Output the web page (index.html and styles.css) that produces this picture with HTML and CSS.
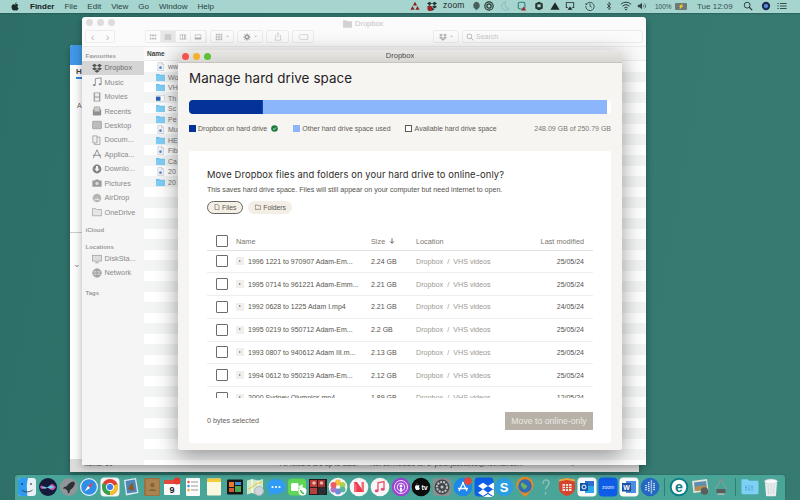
FILE: index.html
```html
<!DOCTYPE html>
<html lang="en">
<head>
<meta charset="utf-8">
<title>Manage hard drive space</title>
<link rel="stylesheet" href="styles.css">
</head>
<body>
<svg class="defs" width="0" height="0">
  <symbol id="db" viewBox="0 0 24 24"><path d="M6 2 12 6 6 10 0 6zM18 2 24 6 18 10 12 6zM0 14 6 10 12 14 6 18zM24 14 18 18 12 14 18 10zM6 19.5 12 15.5 18 19.5 12 23.5z"/></symbol>
  <symbol id="folder" viewBox="0 0 12 10"><path d="M0 1.2C0 .5.4 0 1 0h3l1 1.2h6c.6 0 1 .4 1 1V9c0 .6-.4 1-1 1H1c-.6 0-1-.4-1-1z" fill="#6cc0ee"/><path d="M0 2.4h12V9c0 .6-.4 1-1 1H1c-.6 0-1-.4-1-1z" fill="#7fcdf5"/></symbol>
  <symbol id="doc" viewBox="0 0 12 12"><path d="M2.5.5h5l2.500 2.500v8.500h-7.500z" fill="#f4f6f8" stroke="#b5bcc4" stroke-width=".7"/><path d="M7.500.5v2.500h2.500" fill="none" stroke="#b5bcc4" stroke-width=".7"/><circle cx="6" cy="7.500" r="1.800" fill="#5b87c9"/></symbol>
</svg>

<header class="menubar">
  <svg class="apple" viewBox="0 0 16 18"><path d="M11.200 1c.1 1.200-1.200 3-3 2.800C8 2.400 9.600 1 11.200 1zM8.200 5c.9 0 1.800-.8 3.200-.8 1.300 0 2.500.7 3.200 1.800-2.700 1.600-2.200 5.400.6 6.500-.7 1.900-2.200 4.500-3.800 4.500-1 0-1.500-.7-2.800-.7s-1.900.7-2.900.7C3.800 17 1 13.400 1 9.800 1 6.500 3.100 4.300 5.300 4.300c1.300 0 2.200.7 2.900.7z"/></svg>
  <strong class="menu-app">Finder</strong>
  <span>File</span><span>Edit</span><span>View</span><span>Go</span><span>Window</span><span>Help</span>
  <div class="status">
    <svg class="st" style="left:410px" viewBox="0 0 12 12"><path d="M6 1 8.500 5.500h-5zM3 6 5.500 10.500H.5zM9 6 11.500 10.500h-5z" fill="#8e1f1f"/></svg>
    <svg class="st" style="left:427px" viewBox="0 0 24 24"><use href="#db" fill="#26332f"/><circle cx="7" cy="18" r="6" fill="#a31f1f"/></svg>
    <span class="st-text zoomtxt">zoom</span>
    <svg class="st" style="left:471px" viewBox="0 0 12 12"><path d="M6 1a4.500 4.500 0 0 1 2 8.500L6 11.500l-.6-2A4.500 4.500 0 0 1 6 1z" fill="#47605c"/></svg>
    <svg class="st" style="left:484px" viewBox="0 0 12 12"><circle cx="6" cy="6" r="5" fill="none" stroke="#26332f" stroke-width="1.400"/><circle cx="6" cy="6" r="2.600" fill="none" stroke="#26332f" stroke-width="1.400"/></svg>
    <svg class="st" style="left:500px" viewBox="0 0 12 12"><path d="M7 1a5 5 0 1 0 4 8A5 5 0 0 1 7 1z" fill="none" stroke="#8fbab5" stroke-width="1.200"/></svg>
    <svg class="st" style="left:517px" viewBox="0 0 12 12"><rect x="1.500" y="1.500" width="8" height="8" rx="2" fill="none" stroke="#2f7f80" stroke-width="1.300"/><path d="M8 6.500 11 11.500H5z" fill="#a32a2a"/></svg>
    <svg class="st" style="left:534px" viewBox="0 0 12 12"><path d="M6 .8 10.500 3v6L6 11.200 1.500 9V3z" fill="#26332f"/><rect x="4" y="4" width="4" height="3.500" fill="#a5d4cf"/></svg>
    <svg class="st" style="left:550px" viewBox="0 0 12 12"><path d="M6 1.500 11.500 10.500H.5z" fill="#1e2a28"/></svg>
    <svg class="st" style="left:565px" viewBox="0 0 12 12"><path d="M1 1.500h10v7H9L8 7.500h2V2.500H2v5h2L3 8.500H1z" fill="#1e2a28"/><path d="M6 6.500 9 10.500H3z" fill="#1e2a28"/></svg>
    <svg class="st" style="left:585px" viewBox="0 0 12 12"><path d="M2 3.500A5 5 0 1 1 1 6" fill="none" stroke="#33443f"/><path d="M6 3v3.200L8 7.500" fill="none" stroke="#33443f"/><path d="M.5 2.500 3 3.700 1 5.500z" fill="#33443f"/></svg>
    <svg class="st" style="left:604px" viewBox="0 0 12 12"><path d="M3.500 3.500 8 8 6 10.500V1.500L8 4 3.500 8.500" fill="none" stroke="#33443f"/></svg>
    <svg class="st wifi" viewBox="0 0 14 11"><path d="M1 3.500a8.500 8.500 0 0 1 12 0M3 5.700a5.600 5.600 0 0 1 8 0M5 7.800a2.800 2.800 0 0 1 4 0" fill="none" stroke="#26332f" stroke-width="1.100"/><circle cx="7" cy="9.600" r="1" fill="#26332f"/></svg>
    <svg class="st" style="left:637px" viewBox="0 0 12 12"><path d="M1 4.500h2l3-2.500v8L3 7.500H1z" fill="#33443f"/><path d="M7.500 4.500a2 2 0 0 1 0 3M9 3a4 4 0 0 1 0 6" fill="none" stroke="#33443f" stroke-width=".8"/></svg>
    <span class="st-text pct">100%</span>
    <span class="battery">⚡</span>
    <span class="st-text clock">Tue 12:09</span>
    <svg class="st" style="left:743px" viewBox="0 0 12 12"><circle cx="5" cy="5" r="3.500" fill="none" stroke="#26332f" stroke-width="1.100"/><path d="M7.500 7.500 11 11" stroke="#26332f" stroke-width="1.300"/></svg>
    <svg class="st" style="left:761px" viewBox="0 0 12 12"><circle cx="6" cy="6" r="5" fill="#1c2c55"/><circle cx="6" cy="6" r="2.500" fill="#5a8fd8"/></svg>
    <svg class="st" style="left:777px" viewBox="0 0 12 12"><path d="M3.500 3h8M3.500 6h8M3.500 9h8" stroke="#26332f"/><path d="M.5 3h1.500M.5 6h1.500M.5 9h1.500" stroke="#26332f"/></svg>
  </div>
</header>

<main class="desktop">
  <section class="window back">
    <div class="back-head"></div>
    <div class="back-tab">H</div>
    <div class="back-a">A</div>
    <hr class="back-rule">
    <div class="back-chev">⌄</div>
    <div class="back-status">
      <span class="bs-items">Items: 10</span>
      <span class="bs-sync">All folders are up to date.</span>
      <span class="bs-conn">Not connected to: 1. peterjacobs0z@hotmail.com</span>
      <span class="bs-slider"><i></i></span>
    </div>
  </section>

  <section class="window finder">
    <div class="f-title">
      <div class="lights"><i></i><i></i><i></i></div>
      <div class="f-name"><svg width="9" height="8" viewBox="0 0 12 10"><path d="M0 1.200C0 .5.400 0 1 0h3l1 1.200h6c.6 0 1 .4 1 1V9c0 .6-.4 1-1 1H1c-.6 0-1-.4-1-1z" fill="#d2d2d2"/></svg>Dropbox</div>
    </div>
    <div class="f-toolbar">
      <div class="tb-btn tb-nav"><span>‹</span><span>›</span></div>
      <div class="tb-btn tb-views">
        <span><svg viewBox="0 0 10 8"><path d="M1 1h2v2H1zM4 1h2v2H4zM7 1h2v2H7zM1 5h2v2H1zM4 5h2v2H4zM7 5h2v2H7z"/></svg></span>
        <span class="on"><svg viewBox="0 0 10 8"><path d="M1 1h8v1H1zM1 3.500h8v1H1zM1 6h8v1H1z"/></svg></span>
        <span><svg viewBox="0 0 10 8"><path d="M1 1h8v6H1zM1.700 1.700v4.600h2V1.700zm3 0v4.600h1.600V1.700zm2.600 0v4.600h1V1.700z" fill-rule="evenodd"/></svg></span>
        <span><svg viewBox="0 0 10 8"><path d="M1 1h8v6H1zM1.700 1.700V4.500h6.600V1.700z" fill-rule="evenodd"/></svg></span>
      </div>
      <div class="tb-btn tb-drop"><svg viewBox="0 0 10 10"><path d="M1 1h2v2H1zM4 1h2v2H4zM7 1h2v2H7zM1 4h2v2H1zM4 4h2v2H4zM7 4h2v2H7zM1 7h2v2H1zM4 7h2v2H4zM7 7h2v2H7z"/></svg><b>⌄</b></div>
      <div class="tb-btn tb-gear"><svg viewBox="0 0 10 10"><circle cx="5" cy="5" r="2.200" fill="none" stroke="#a0a0a0" stroke-width="2"/><path d="M5 .5v2M5 7.500v2M.5 5h2M7.500 5h2M1.800 1.800l1.400 1.400M6.800 6.800l1.400 1.400M8.200 1.800 6.800 3.200M3.200 6.800 1.800 8.200" stroke="#a0a0a0" stroke-width="1.200"/></svg><b>⌄</b></div>
      <div class="tb-btn tb-share"><svg viewBox="0 0 10 12"><path d="M3 4.500H1.500V11h7V4.500H7M5 7.500V1M3.300 2.700 5 1l1.700 1.700" fill="none" stroke="#bdbdbd" stroke-width=".8"/></svg></div>
      <div class="tb-btn tb-tag"><svg viewBox="0 0 14 8"><path d="M3 1h9.500v6H3L.7 4z" fill="none" stroke="#c4c4c4" stroke-width=".8"/></svg></div>
      <div class="tb-spacer"></div>
      <div class="tb-btn tb-dbx"><svg viewBox="0 0 24 24"><use href="#db" fill="#b0b0b0"/></svg><b>⌄</b></div>
      <div class="tb-btn tb-search"><svg viewBox="0 0 10 10"><circle cx="4.200" cy="4.200" r="3" fill="none" stroke="#a9a9a9"/><path d="M6.500 6.500 9.300 9.300" stroke="#a9a9a9"/></svg>Search</div>
    </div>
    <div class="f-body">
      <nav class="sidebar">
        <div class="s-head s-first">Favourites</div>
        <div class="s-item sel"><svg viewBox="0 0 24 24"><use href="#db" fill="#555"/></svg>Dropbox</div>
        <div class="s-item"><svg viewBox="0 0 12 12"><path d="M4 9.500V2l7-1v7.500" fill="none" stroke="#8d8d8d" stroke-width="1.100"/><ellipse cx="2.700" cy="9.700" rx="1.700" ry="1.300" fill="#8d8d8d"/><ellipse cx="9.700" cy="8.700" rx="1.700" ry="1.300" fill="#8d8d8d"/></svg>Music</div>
        <div class="s-item"><svg viewBox="0 0 12 12"><path d="M2 .5h8v11H2z" fill="#9a9a9a"/><path d="M3.500 1.500h5v4h-5zM3.500 6.500h5v4h-5z" fill="#eee"/></svg>Movies</div>
        <div class="s-item"><svg viewBox="0 0 12 12"><rect x="1" y="4" width="10" height="7.500" rx="1.500" fill="#8f8f8f"/><rect x="2.500" y="1" width="7" height="6" rx="1" fill="#c9c9c9" stroke="#8f8f8f" stroke-width=".6"/></svg>Recents</div>
        <div class="s-item"><svg viewBox="0 0 12 12"><rect x=".5" y="1.500" width="11" height="9" rx="1" fill="#bcbcbc" stroke="#8f8f8f" stroke-width=".7"/></svg>Desktop</div>
        <div class="s-item"><svg viewBox="0 0 12 12"><path d="M3 2.500h6.500v9H3z" fill="#eee" stroke="#8f8f8f" stroke-width=".8"/><path d="M1 1h5v8.500H1z" fill="#eee" stroke="#8f8f8f" stroke-width=".8"/></svg>Docum...</div>
        <div class="s-item"><svg viewBox="0 0 12 12"><path d="M6 1 1.500 11M6 1l4.500 10M1 7.500h10" fill="none" stroke="#7f7f7f"/></svg>Applica...</div>
        <div class="s-item"><svg viewBox="0 0 12 12"><circle cx="6" cy="6" r="5.300" fill="#808080"/><path d="M4.700 2.500h2.600v3.300h2L6 9.300 2.700 5.800h2z" fill="#f4f4f4"/></svg>Downlo...</div>
        <div class="s-item"><svg viewBox="0 0 12 12"><path d="M.5 3h3l1-1.200h3l1 1.200h3v7.500H.5z" fill="#9b9b9b"/><circle cx="6" cy="6.500" r="2" fill="#dcdcdc"/></svg>Pictures</div>
        <div class="s-item"><svg viewBox="0 0 12 12"><circle cx="6" cy="6" r="5.200" fill="#b5b5b5"/><path d="M2.300 9A5 5 0 0 1 9.700 9M3.800 8.300A3 3 0 0 1 8.200 8.300" fill="none" stroke="#f4f4f4" stroke-width=".8"/></svg>AirDrop</div>
        <div class="s-item"><svg viewBox="0 0 12 12"><path d="M.5 2h4l1 1h6v7.500H.5z" fill="#e6e6e6" stroke="#8d8d8d" stroke-width=".7"/></svg>OneDrive</div>
        <div class="s-head s-icloud">iCloud</div>
        <div class="s-head s-loc">Locations</div>
        <div class="s-item"><svg viewBox="0 0 12 12"><rect x=".5" y="1.500" width="11" height="7" fill="#dcdcdc" stroke="#8f8f8f" stroke-width=".7"/><path d="M4 10.500h4" stroke="#8f8f8f"/></svg>DiskSta...</div>
        <div class="s-item"><svg viewBox="0 0 12 12"><circle cx="6" cy="6" r="5" fill="#ccc" stroke="#808080" stroke-width=".8"/><path d="M1 6h10M6 1v10M2.500 3h7M2.500 9h7" stroke="#808080" stroke-width=".6"/></svg>Network</div>
        <div class="s-head s-tags">Tags</div>
      </nav>
      <div class="list">
        <div class="list-head"><b>Name</b></div>
        <div class="list-rows">
          <div class="l-row"><svg viewBox="0 0 12 12"><use href="#doc"/></svg>www</div>
          <div class="l-row"><svg viewBox="0 0 12 10"><use href="#folder"/></svg>Wo</div>
          <div class="l-row"><svg viewBox="0 0 12 10"><use href="#folder"/></svg>VH</div>
          <div class="l-row"><svg viewBox="0 0 12 12"><rect x="1" y="2" width="10" height="8" fill="#fff" stroke="#b9c7de" stroke-width=".7"/><rect x="0" y="3.500" width="6" height="5.500" fill="#2a62b8"/></svg>Th</div>
          <div class="l-row"><svg viewBox="0 0 12 10"><use href="#folder"/></svg>Sc</div>
          <div class="l-row"><svg viewBox="0 0 12 10"><use href="#folder"/></svg>Pe</div>
          <div class="l-row"><svg viewBox="0 0 12 12"><use href="#doc"/></svg>Mu</div>
          <div class="l-row"><svg viewBox="0 0 12 10"><use href="#folder"/></svg>HE</div>
          <div class="l-row"><svg viewBox="0 0 12 12"><use href="#doc"/></svg>Fib</div>
          <div class="l-row"><svg viewBox="0 0 12 10"><use href="#folder"/></svg>Ca</div>
          <div class="l-row"><svg viewBox="0 0 12 12"><use href="#doc"/></svg>20</div>
          <div class="l-row"><svg viewBox="0 0 12 10"><use href="#folder"/></svg>20</div>
        </div>
      </div>
    </div>
  </section>

  <section class="window dialog">
    <div class="d-title">
      <div class="lights live"><i></i><i></i><i></i></div>
      <span>Dropbox</span>
    </div>
    <div class="d-body">
      <h1>Manage hard drive space</h1>
      <div class="usage"><div class="u-dbx"></div><div class="u-other"></div></div>
      <div class="legend">
        <span class="swatch dark"></span><span>Dropbox on hard drive</span>
        <svg class="ok" viewBox="0 0 8 8"><circle cx="4" cy="4" r="3.800" fill="#1f7a3d"/><path d="M2.300 4.100 3.500 5.300 5.700 2.900" fill="none" stroke="#fff" stroke-width=".9"/></svg>
        <span class="swatch light"></span><span>Other hard drive space used</span>
        <span class="swatch empty"></span><span>Available hard drive space</span>
        <span class="legend-total">248.09 GB of 250.79 GB</span>
      </div>
      <div class="card">
        <h2>Move Dropbox files and folders on your hard drive to online-only?</h2>
        <p>This saves hard drive space. Files will still appear on your computer but need internet to open.</p>
        <div class="pills">
          <span class="pill active"><svg viewBox="0 0 8 9"><path d="M1 .5h4l2 2v6H1z" fill="none" stroke="#4e4a44" stroke-width=".8"/></svg>Files</span>
          <span class="pill"><svg viewBox="0 0 9 8"><path d="M.5 1h3l1 1h4v5.500h-8z" fill="none" stroke="#4e4a44" stroke-width=".8"/></svg>Folders</span>
        </div>
        <div class="t-row t-head">
          <span class="check"></span><span>Name</span>
          <span class="size-h">Size <svg viewBox="0 0 8 8"><path d="M4 .5V7M1.500 4.500 4 7l2.500-2.500" fill="none" stroke="#3d3a36" stroke-width="1"/></svg></span>
          <span>Location</span><span>Last modified</span>
        </div>
        <div class="t-scroll">
          <div class="t-row"><span class="check"></span><span class="t-name"><i class="thumb"></i>1996 1221 to 970907 Adam-Em...</span><span class="t-size">2.24 GB</span><span class="t-loc">Dropbox&nbsp; /&nbsp; VHS videos</span><span class="t-date">25/05/24</span></div>
          <div class="t-row"><span class="check"></span><span class="t-name"><i class="thumb"></i>1995 0714 to 961221 Adam-Emm...</span><span class="t-size">2.21 GB</span><span class="t-loc">Dropbox&nbsp; /&nbsp; VHS videos</span><span class="t-date">25/05/24</span></div>
          <div class="t-row"><span class="check"></span><span class="t-name"><i class="thumb"></i>1992 0628 to 1225 Adam I.mp4</span><span class="t-size">2.21 GB</span><span class="t-loc">Dropbox&nbsp; /&nbsp; VHS videos</span><span class="t-date">24/05/24</span></div>
          <div class="t-row"><span class="check"></span><span class="t-name"><i class="thumb"></i>1995 0219 to 950712 Adam-Em...</span><span class="t-size">2.2 GB</span><span class="t-loc">Dropbox&nbsp; /&nbsp; VHS videos</span><span class="t-date">25/05/24</span></div>
          <div class="t-row"><span class="check"></span><span class="t-name"><i class="thumb"></i>1993 0807 to 940612 Adam III.m...</span><span class="t-size">2.13 GB</span><span class="t-loc">Dropbox&nbsp; /&nbsp; VHS videos</span><span class="t-date">25/05/24</span></div>
          <div class="t-row"><span class="check"></span><span class="t-name"><i class="thumb"></i>1994 0612 to 950219 Adam-Em...</span><span class="t-size">2.12 GB</span><span class="t-loc">Dropbox&nbsp; /&nbsp; VHS videos</span><span class="t-date">25/05/24</span></div>
          <div class="t-row"><span class="check"></span><span class="t-name"><i class="thumb"></i>2000 Sydney Olympics.mp4</span><span class="t-size">1.89 GB</span><span class="t-loc">Dropbox&nbsp; /&nbsp; VHS videos</span><span class="t-date">12/05/24</span></div>
        </div>
        <div class="c-foot">
          <span>0 bytes selected</span>
          <span class="move">Move to online-only</span>
        </div>
      </div>
    </div>
  </section>
</main>

<footer class="dock">
  <svg viewBox="0 0 20 20"><rect x="1" y="1" width="18" height="18" rx="3" fill="#e9f1f7"/><path d="M1 4a3 3 0 0 1 3-3h7c-1 4-1.500 8-1 11-.1 2 0 4.500.5 7H4a3 3 0 0 1-3-3z" fill="#2e9af0"/><path d="M5 6v2M14 6v2" stroke="#123" /><path d="M4.500 13c3 2.500 8 2.500 11 0" fill="none" stroke="#234" stroke-width=".8"/></svg>
  <svg viewBox="0 0 20 20"><circle cx="10" cy="10" r="9" fill="#141a3a"/><path d="M2 10c3-5 4 4 8 0s4-4 8 0c-3 5-5 3-8 1s-5 4-8-1z" fill="#c74fb0"/><path d="M4 10c3-2 4 2 6 0s4-2 6 0c-3 3-4 1-6 1s-3 2-6-1z" fill="#5fd7e8"/></svg>
  <svg viewBox="0 0 20 20"><circle cx="10" cy="10" r="9" fill="#8f9499"/><path d="M14.500 4.500c-3 .3-5.500 2.500-7 5l-2.500.5-1 1.500 2.500.3 2.200 2.200.3 2.500 1.500-1 .5-2.500c2.500-1.500 4.700-4 5-7z" fill="#2c3035"/></svg>
  <svg viewBox="0 0 20 20"><circle cx="10" cy="10" r="9" fill="#e9f3fb"/><circle cx="10" cy="10" r="7.800" fill="#2f8fe6"/><path d="M14.500 5.500 11 11 9 9z" fill="#ef3f3f"/><path d="M5.500 14.500 9 9l2 2z" fill="#fff"/></svg>
  <svg viewBox="0 0 20 20"><rect x=".5" y=".5" width="19" height="19" rx="4" fill="#f5f5f5"/><circle cx="10" cy="10" r="8" fill="#e0402f"/><path d="M10 10 17.400 7A8 8 0 0 1 10 18z" fill="#f3c22d"/><path d="M10 10 10 18A8 8 0 0 1 3.100 6z" fill="#2fa34f"/><circle cx="10" cy="10" r="3.700" fill="#3f7fe8" stroke="#fff"/></svg>
  <svg viewBox="0 0 20 20"><path d="M3 3 15 1l2.500 15L5 18.500z" fill="#dfe9f3"/><path d="M4.500 4 14 2.500 16 15 6 16.500z" fill="#4d86b7"/><path d="M7 12c1-4 4-6 5-6 0 3 .5 5 1.500 7l-3 .5z" fill="#8a5b2f"/></svg>
  <svg viewBox="0 0 20 20"><rect x="2" y="1" width="16" height="18" rx="1.500" fill="#9b7342"/><rect x="4" y="2" width="13" height="16" fill="#a98350"/><circle cx="10.500" cy="8" r="2.200" fill="#8a6436"/><path d="M6.500 14c.8-2.500 7.200-2.500 8 0z" fill="#8a6436"/></svg>
  <svg viewBox="0 0 20 20"><rect x="2" y="3" width="16" height="15" rx="1" fill="#fafafa"/><rect x="2" y="3" width="16" height="4" fill="#e04a3f"/><text x="10" y="16" class="ic-cal">9</text><circle cx="15" cy="4" r="3.500" fill="#e93b30"/></svg>
  <svg viewBox="0 0 20 20"><rect x="3" y="1" width="14" height="18" rx="1" fill="#fbfbfb"/><path d="M8 5h7M8 9h7M8 13h7" stroke="#9a9a9a"/><circle cx="5.500" cy="5" r="1.200" fill="#f0443a"/><circle cx="5.500" cy="9" r="1.200" fill="#2f86f0"/><circle cx="5.500" cy="13" r="1.200" fill="#f59a23"/></svg>
  <svg viewBox="0 0 20 20"><rect x="3" y="1.500" width="14" height="17" rx="1" fill="#fbf8df"/><path d="M3 2.500a1 1 0 0 1 1-1h12a1 1 0 0 1 1 1V5H3z" fill="#f5cd3d"/></svg>
  <svg viewBox="0 0 20 20"><rect x="2" y="2.500" width="16" height="15" rx="1" fill="#161616"/><rect x="4" y="5" width="5" height="5" fill="#e87a2c"/><rect x="10" y="5" width="6" height="3" fill="#3f8edb"/><rect x="10" y="9" width="6" height="6" fill="#4ca64c"/><rect x="4" y="11" width="5" height="4" fill="#cf5a2c"/></svg>
  <svg viewBox="0 0 20 20"><path d="M2 3.500 7 2l6 1.500L18 2v14l-5 2-6-2-5 1.500z" fill="#d3e9c8"/><path d="M7 2v14M13 3.500V18" stroke="#fff"/><path d="M3 12c4-1 6-5 14-7" stroke="#f3c22d" fill="none"/><circle cx="14" cy="14" r="4.500" fill="#cfd5da" stroke="#aeb5ba"/></svg>
  <svg viewBox="0 0 20 20"><path d="M10 2c5 0 9 3.300 9 7.500S15 17 10 17c-1 0-2-.1-3-.5C5.500 18 3.500 18.500 2 18.500c1-1 1.800-2.300 1.800-3.500C2 13.600 1 11.700 1 9.500 1 5.300 5 2 10 2z" fill="#2f9bf5"/><circle cx="6.500" cy="10" r="1.100" fill="#fff"/><circle cx="10" cy="10" r="1.100" fill="#fff"/><circle cx="13.500" cy="10" r="1.100" fill="#fff"/></svg>
  <svg viewBox="0 0 20 20"><rect x="1" y="1.500" width="18" height="17" rx="4" fill="#5fd755"/><rect x="4" y="6" width="7.500" height="8" rx="1.500" fill="#fff"/><path d="M12 9.500 15.500 7v6L12 10.500z" fill="#fff"/><circle cx="15.500" cy="14.500" r="4" fill="#fff"/><path d="M13.500 13c.5 2 1.800 3.300 3.600 3.600" stroke="#35b53c" stroke-width="1.200" fill="none"/></svg>
  <svg viewBox="0 0 20 20"><rect x="1" y="2" width="18" height="16" fill="#2a1b1b"/><rect x="2" y="3" width="7" height="7" fill="#c23b3b"/><rect x="10" y="3" width="7" height="7" fill="#a63434"/><rect x="2" y="11" width="7" height="6" fill="#b54040"/><circle cx="6" cy="6" r="1.800" fill="#e6b9a1"/><circle cx="13.500" cy="6" r="1.800" fill="#e6b9a1"/><circle cx="14" cy="14" r="4" fill="#2a2f36"/></svg>
  <svg viewBox="0 0 20 20"><circle cx="10" cy="10" r="9.300" fill="#f7f7f7"/><g opacity=".9"><circle cx="10" cy="5.500" r="3" fill="#f6b92b"/><circle cx="14.500" cy="8" r="3" fill="#a6cf3f"/><circle cx="14.500" cy="12.500" r="3" fill="#48b38c"/><circle cx="10" cy="14.500" r="3" fill="#5c83d6"/><circle cx="5.500" cy="12.500" r="3" fill="#a768bd"/><circle cx="5.500" cy="8" r="3" fill="#ee4d54"/></g></svg>
  <svg viewBox="0 0 20 20"><circle cx="10" cy="10" r="9.300" fill="#f5f5f5"/><path d="M5 15V5l3 0 7 10h-3z" fill="#f03a4d"/><path d="M5 5v10h2.500V8.500zM15 15V5h-2.500v6.500z" fill="#f36b7a"/></svg>
  <svg viewBox="0 0 20 20"><circle cx="10" cy="10" r="9.300" fill="#f6f6f6"/><path d="M8 13.500V5.800l6-1.300v7.500" fill="none" stroke="#ef4f70" stroke-width="1.300"/><ellipse cx="6.700" cy="13.800" rx="1.900" ry="1.500" fill="#e94a78"/><ellipse cx="12.700" cy="12.300" rx="1.900" ry="1.500" fill="#e94a78"/></svg>
  <svg viewBox="0 0 20 20"><circle cx="10" cy="10" r="9.300" fill="#9a45d4"/><circle cx="10" cy="10" r="6.500" fill="none" stroke="#f3e3fb" stroke-width="1"/><circle cx="10" cy="10" r="3.800" fill="none" stroke="#f3e3fb" stroke-width="1"/><circle cx="10" cy="9" r="1.500" fill="#fff"/><path d="M9 11h2l-.4 4.500h-1.200z" fill="#fff"/></svg>
  <svg viewBox="0 0 20 20"><circle cx="10" cy="10" r="9.300" fill="#0c0c0c"/><text x="10.500" y="12.800" class="ic-tv">tv</text><path d="M5.500 7.500c.5 0 1-.5 1-1-.5 0-1 .5-1 1zM4 10c0-1 .7-1.800 1.500-1.800.4 0 .7.200 1 .2s.6-.2 1-.2c.8 0 1.200.6 1.200.6-1 .6-.8 2 .2 2.400-.3.800-.9 1.800-1.500 1.800-.4 0-.6-.3-1-.3s-.6.300-1 .3C5 13 4 11.400 4 10z" fill="#fff"/></svg>
  <svg viewBox="0 0 20 20"><rect x="1" y="1" width="18" height="18" rx="4" fill="#8c8f91"/><circle cx="10" cy="10" r="7.500" fill="#43474a"/><circle cx="10" cy="10" r="5" fill="none" stroke="#bfc3c6" stroke-width="2" stroke-dasharray="2 1"/><circle cx="10" cy="10" r="1.500" fill="#bfc3c6"/></svg>
  <svg viewBox="0 0 20 20"><circle cx="10" cy="10" r="9.300" fill="#1f86ea"/><path d="M10.500 5 6 14M9.500 5 14 14M5 11.500h10" stroke="#fff" stroke-width="1.300" fill="none"/><circle cx="15" cy="4" r="3.800" fill="#e8463c"/></svg>
  <svg viewBox="0 0 20 20"><rect x=".5" y=".5" width="19" height="19" rx="4" fill="#0e5fe8"/><svg x="4" y="4" width="12" height="12" viewBox="0 0 24 24"><use href="#db" fill="#fff"/></svg></svg>
  <svg viewBox="0 0 20 20"><circle cx="10" cy="10" r="9.300" fill="#2c9ee0"/><text x="10" y="14.500" class="ic-s">S</text></svg>
  <svg viewBox="0 0 20 20"><path d="M10 20 5 15a8.500 8.500 0 1 1 10 0z" fill="#e78a24"/><circle cx="10" cy="9" r="6.800" fill="#2f6db8"/><path d="M6 6c3-1 3 2 5 2s1 3-1 4-2-2-4-3z" fill="#6fb15a"/></svg>
  <svg viewBox="0 0 20 20"><path d="M8 7C8 4 9.300 3 11 3s3 1.200 3 3c0 3-3.500 3.500-3.500 6.500M10.500 15v2.500" fill="none" stroke="#8fbfb8" stroke-width="1.400" transform="translate(-1)"/></svg>
  <svg viewBox="0 0 20 20"><path d="M2 2.500 10 1l8 1.500V11c0 4-4 7-8 8-4-1-8-4-8-8z" fill="#d8432c"/><path d="M2 2.500 10 1l8 1.500v2L10 3 2 4.500z" fill="#e2b04c"/><path d="M5.500 7h9v7h-9z" fill="#f3e8dc"/><path d="M5.500 9.300h9M5.500 11.600h9M8.500 7v7M11.500 7v7" stroke="#c63a27" stroke-width=".8"/></svg>
  <svg viewBox="0 0 20 20"><rect x=".5" y=".5" width="19" height="19" rx="4" fill="#fafafa"/><rect x="8" y="4" width="9" height="12" fill="#2fa8ea"/><rect x="8" y="4" width="9" height="5" fill="#2f6fd0"/><rect x="3" y="6" width="8" height="8" fill="#1456a8"/><circle cx="7" cy="10" r="2" fill="none" stroke="#fff"/></svg>
  <svg viewBox="0 0 20 20"><rect x=".5" y=".5" width="19" height="19" rx="4" fill="#0f5ce8"/><text x="10" y="11.800" class="ic-zoom">zoom</text></svg>
  <svg viewBox="0 0 20 20"><rect x=".5" y=".5" width="19" height="19" rx="4" fill="#fafafa"/><rect x="7" y="4" width="10" height="12" fill="#4a8fe0"/><rect x="3" y="6" width="9" height="8.500" fill="#1b4fa0"/><text x="7.500" y="13" class="ic-w">W</text></svg>
  <svg viewBox="0 0 20 20"><circle cx="10" cy="10" r="9.300" fill="#2467c2"/><path d="M6 8v6M8.700 5v10M11.400 3.500v13M14.100 6v8" stroke="#e5eef9" stroke-width="1.500" stroke-dasharray="1.300 .7"/></svg>
  <i class="dock-sep"></i>
  <svg viewBox="0 0 20 20"><circle cx="10" cy="10" r="9.300" fill="#0f7d86"/><circle cx="10" cy="10" r="7.300" fill="#fff"/><text x="10" y="15" class="ic-e">e</text></svg>
  <svg viewBox="0 0 20 20"><path d="M2 4 17 2l1.500 12-15 2z" fill="#e7e3d4"/><path d="M4 5.500 16 4l1 8.500-12 1.500z" fill="#5b8db5"/><path d="M4.500 11c3-3 7-3 12-2l.5 3.500-12 1.500z" fill="#b18e54"/><circle cx="14.500" cy="14" r="3.800" fill="#5d5d5d"/></svg>
  <svg viewBox="0 0 20 20"><path d="M10 3 4 12M10 3l6 9" fill="none" stroke="#9a9a9a" stroke-width=".9"/><circle cx="10" cy="3" r="1.500" fill="#8b8b8b"/><path d="M5.500 12h9v4h-9z" fill="#5c5c5c"/><path d="M6.500 16.500h7v1.500h-7z" fill="#b3b3b3"/></svg>
  <i class="dock-sep"></i>
  <svg viewBox="0 0 20 20"><path d="M1.500 3.500c0-.7.500-1.200 1.200-1.200h5l1.500 1.500h8c.7 0 1.300.6 1.300 1.300v11c0 .7-.6 1.200-1.300 1.200H2.700c-.7 0-1.200-.5-1.200-1.200z" fill="#7fd0f5"/><path d="M6 8v6M9 8v6M12 8v6M5 10.500h2M8 12.500h2M11 10h2" stroke="#4eacdd"/></svg>
  <svg viewBox="0 0 20 20"><path d="M4 5.500h12L15 18.500a1 1 0 0 1-1 .8H6a1 1 0 0 1-1-.8z" fill="#eaeeee"/><ellipse cx="10" cy="4.500" rx="6.500" ry="2.500" fill="#f6f8f8" stroke="#b7bdbd" stroke-width=".5"/><path d="M7 8l.6 9M10 8v9M13 8l-.6 9" stroke="#b9bfbf" stroke-width=".5"/></svg>
</footer>
</body>
</html>
```
FILE: styles.css
```css
* { box-sizing: border-box; }
html, body { margin: 0; height: 100%; }
body {
  width: 800px; height: 500px; overflow: hidden;
  display: flex; flex-direction: column;
  font-family: "Liberation Sans", Arial, sans-serif;
  background: linear-gradient(100deg, #2d6f68, #35796f 60%, #367a72);
  color: #333;
}
.defs { position: absolute; }

/* menu bar */
.menubar {
  flex: none; height: 12.500px; background: #a6d5d0; position: relative; z-index: 5;
  display: flex; align-items: center; gap: 10px;
  padding-left: 11px; font-size: 8px; color: #27403c;
  box-shadow: 0 1px 1px rgba(0,0,0,.15);
}
.apple { width: 8px; height: 9px; fill: #1c2a28; margin-right: 1px; }
.menu-app { color: #16211f; }
.status { position: absolute; inset: 0; pointer-events: none; }
.st { position: absolute; top: 1px; width: 10px; height: 10px; }
.st.wifi { left: 620px; width: 12px; }
.st-text { position: absolute; top: 2px; line-height: 9px; color: #33504b; white-space: nowrap; }
.zoomtxt { left: 443px; font-size: 8.500px; top: 1px; color: #1e2a28; letter-spacing: .2px; }
.pct { left: 655px; font-size: 6.500px; }
.clock { left: 697px; font-size: 8px; }
.battery {
  position: absolute; left: 675px; top: 3px; width: 12px; height: 6.500px;
  background: #6b7a76; border-radius: 1px; font-size: 5px; line-height: 6.500px;
  text-align: center; color: #dff;
}

/* desktop canvas */
.desktop { flex: 1; position: relative; min-height: 0; }
.window { position: absolute; }
.dock {
  flex: none; height: 25px; margin: 0 15px; padding: 2px 0 0 2px;
  background: #4aa599; border-radius: 3px 3px 0 0;
  display: flex; align-items: flex-start; gap: .750px;
  box-shadow: 0 0 2px rgba(0,0,0,.2);
}
.dock svg { width: 20px; height: 20px; flex: none; }
.dock-sep { flex: none; width: 1px; height: 18px; margin: 1px 3.500px; background: #2f7d75; }
.ic-cal { font: 700 9px "Liberation Sans", sans-serif; text-anchor: middle; fill: #222; }
.ic-tv { font: 700 7px "Liberation Sans", sans-serif; fill: #fff; }
.ic-s { font: 700 13px "Liberation Sans", sans-serif; text-anchor: middle; fill: #fff; }
.ic-zoom { font: 400 5px "Liberation Sans", sans-serif; text-anchor: middle; fill: #e7f0ff; }
.ic-w { font: 700 7px "Liberation Sans", sans-serif; text-anchor: middle; fill: #fff; }
.ic-e { font: 700 14px "Liberation Sans", sans-serif; text-anchor: middle; fill: #0f7d86; }

/* back window */
.back {
  left: 70px; top: 32.500px; width: 569px; height: 427px;
  background: #fdfdfd; border-radius: 3px 0 0 0;
  box-shadow: 0 2px 6px rgba(0,0,0,.3);
}
.back-head { height: 20px; background: #3f97e6; border-radius: 3px 0 0 0; }
.back-tab { position: absolute; left: 6px; top: 22px; font-size: 8px; font-weight: 700; color: #444; border-bottom: 2px solid #2f86e0; padding-bottom: 1px; width: 6px; overflow: hidden; }
.back-a { position: absolute; left: 7px; top: 57px; font-size: 7px; color: #666; }
.back-rule { position: absolute; left: 0; top: 187px; width: 12px; margin: 0; border: 0; border-top: 1px solid #ccc; }
.back-chev { position: absolute; left: 3px; top: 214px; font-size: 9px; color: #888; }
.back-status {
  position: absolute; left: 0; right: 0; bottom: 0; height: 13px;
  background: #dcdcdc; font-size: 7px; line-height: 9px; color: #555; padding-top: 0;
}
.back-status span { position: absolute; top: 0; white-space: nowrap; }
.bs-items { left: 14px; }
.bs-sync { left: 210px; }
.bs-conn { left: 300px; }
.bs-slider { left: 466px; width: 70px; height: 1px; top: 4px !important; background: #777; }
.bs-slider i { position: absolute; left: 34px; top: -2px; width: 5px; height: 5px; border-radius: 50%; background: #aaa; }

/* finder */
.finder {
  left: 82px; top: 4.500px; width: 564px; height: 448px;
  background: #fbfbfb; border-radius: 3px 3px 0 0; overflow: hidden;
  display: flex; flex-direction: column;
  box-shadow: 0 2px 8px rgba(0,0,0,.3);
}
.lights { display: flex; gap: 4px; }
.lights i { width: 7px; height: 7px; border-radius: 50%; background: #dcdcdc; }
.lights.live i:nth-child(1) { background: #f2544d; }
.lights.live i:nth-child(2) { background: #f3b02c; }
.lights.live i:nth-child(3) { background: #5fc038; }
.f-title { flex: none; height: 13px; padding: 2px 4px; position: relative; }
.f-title .lights { padding-left: 0; }
.f-name { position: absolute; left: 261px; top: 2px; display: flex; align-items: center; gap: 3px; font-size: 7.500px; color: #c3c3c3; }
.f-toolbar { flex: none; height: 16.500px; display: flex; gap: 3px; padding: 0 3px; align-items: flex-start; border-bottom: 1px solid #ececec; }
.tb-btn {
  height: 13px; border: 1px solid #ececec; border-radius: 2px; background: #fbfbfb;
  display: flex; align-items: center; justify-content: center; gap: 2px;
  color: #c9c9c9; font-size: 7px;
}
.tb-btn svg { fill: #b3b3b3; width: 8px; height: 8px; }
.tb-btn b { font-weight: 400; font-size: 6px; line-height: 6px; margin-top: -3px; color: #aaa; }
.tb-nav { width: 30px; margin-right: 27px; font-size: 11px; color: #bbb; justify-content: space-around; }
.tb-views { width: 62px; padding: 0; gap: 0; }
.tb-views span { flex: 1; height: 100%; display: flex; align-items: center; justify-content: center; border-right: 1px solid #eee; }
.tb-views span.on { background: #e7e7e7; }
.tb-drop { width: 24px; }
.tb-gear { width: 26px; }
.tb-share { width: 23px; }
.tb-share svg { height: 9px; }
.tb-tag { width: 22px; }
.tb-tag svg { width: 11px; }
.tb-spacer { flex: 1; }
.tb-dbx { width: 26px; }
.tb-dbx svg { width: 8px; }
.tb-search { width: 181px; justify-content: flex-start; padding-left: 3px; }
.f-body { flex: 1; min-height: 0; display: flex; }

.sidebar { flex: none; width: 62px; background: #f5f5f5; font-size: 7px; color: #8a8a8a; }
.s-head { height: 10px; line-height: 10px; font-size: 6px; font-weight: 700; color: #9b9b9b; padding-left: 3.500px; }
.s-first { margin-top: 4px; }
.s-item { height: 14.450px; display: flex; align-items: center; gap: 2.500px; padding-left: 10px; font-size: 7.300px; white-space: nowrap; overflow: hidden; }
.s-item svg { flex: none; width: 10px; height: 10px; }
.s-item.sel { background: #d5d5d5; color: #707070; }
.s-icloud { margin-top: 6px; }
.s-loc { margin-top: 7px; margin-bottom: -1px; }
.s-tags { margin-top: 8px; }
.list { flex: 1; min-width: 0; display: flex; flex-direction: column; }
.list-head { flex: none; height: 14px; border-bottom: 1px solid #ededed; font-size: 6.500px; line-height: 13px; padding-left: 3px; color: #444; background: #fafafa; }
.list-rows {
  flex: 1; padding-top: 1px;
  background: repeating-linear-gradient(#fff 0 10.500px, #f3f4f4 10.500px 21px);
}
.l-row { height: 10.500px; display: flex; align-items: center; gap: 3px; padding-left: 12px; font-size: 7px; color: #777; }
.l-row svg { width: 9px; height: 9px; flex: none; }

/* dialog */
.dialog {
  left: 178px; top: 37.500px; width: 444px; height: 400px;
  background: #f7f5f2; border-radius: 3px 3px 2px 2px; overflow: hidden;
  box-shadow: 0 6px 22px rgba(0,0,0,.4);
  display: flex; flex-direction: column;
}
.d-title {
  flex: none; height: 12.500px; position: relative; text-align: center;
  background: linear-gradient(#e9e7e4, #d9d7d4); border-bottom: 1px solid #c6c4c1;
  font-size: 7.500px; line-height: 12px; color: #4b4b4b;
}
.d-title .lights { position: absolute; left: 3.500px; top: 2.500px; }
.d-body { flex: 1; min-height: 0; padding: 6px 11px 7px; display: flex; flex-direction: column; font-family: Inter, "Liberation Sans", sans-serif; }
h1 { margin: 0; font: 400 13.400px/18px Inter, sans-serif; color: #24221f; letter-spacing: .1px; white-space: nowrap; }
.usage { flex: none; margin-top: 13.500px; height: 13.500px; width: 422px; background: #fff; border-radius: 4px 3px 3px 4px; display: flex; overflow: hidden; }
.u-dbx { width: 74px; background: #033399; border-right: 1px solid #0b4ab5; }
.u-other { width: 344px; background: #8cb6fb; }
.legend { flex: none; margin-top: 10px; height: 9px; display: flex; align-items: center; font-size: 7px; color: #5d5a55; font-family: "Liberation Sans", sans-serif; }
.swatch { flex: none; width: 7px; height: 7px; margin-right: 2px; }
.dark { background: #033399; }
.light { background: #8cb6fb; margin-left: 15px; }
.empty { border: 1px solid #5e5b57; background: #fff; margin-left: 14px; margin-right: 3px; }
.ok { width: 7px; height: 7px; margin-left: 4px; }
.legend-total { margin-left: auto; color: #7a7772; }

.card { flex: 1; min-height: 0; margin-top: 18px; background: #fff; border-radius: 2px; padding: 17px 18px 0; display: flex; flex-direction: column; }
h2 { margin: 0; font: 400 9.400px/13px Inter, sans-serif; color: #2f2d2a; letter-spacing: .1px; white-space: nowrap; }
.card p { margin: 5px 0 0; font: 400 7.100px/9px "Liberation Sans", sans-serif; color: #55524d; white-space: nowrap; }
.pills { flex: none; margin-top: 6px; display: flex; gap: 5px; font: 400 6.800px/13px "Liberation Sans", sans-serif; color: #5a564f; }
.pill { height: 13.500px; padding: 0 6px 0 7px; background: #f4efe6; border-radius: 7px; display: flex; align-items: center; gap: 2px; }
.pill svg { width: 6px; height: 6px; }
.pill.active { border: 1px solid #6b665d; padding: 0 6px; }
.t-row {
  flex: none; display: grid; grid-template-columns: 20px 135px 45px 1fr auto; align-items: center;
  height: 22.750px; padding: 0 9px; border-bottom: 1px solid #efeeec;
  font: 400 7px/9px "Liberation Sans", sans-serif; color: #57534e; white-space: nowrap;
}
.t-head { height: 18px; margin-top: 18.500px; color: #7b7771; border-bottom-color: #e3e2e0; font-size: 7.300px; }
.size-h { display: flex; align-items: center; gap: 4px; }
.size-h svg { width: 6px; height: 6px; }
.check { width: 12px; height: 12px; border: 1px solid #6f6b66; border-radius: 1px; background: #fff; }
.t-scroll { flex: none; height: 147px; overflow: hidden; }
.t-name { display: flex; align-items: center; gap: 4px; overflow: hidden; }
.thumb { flex: none; width: 8px; height: 8px; background: #f1efec; position: relative; }
.thumb::after { content: ""; position: absolute; left: 3px; top: 2.500px; border-left: 2.500px solid #777; border-top: 1.500px solid transparent; border-bottom: 1.500px solid transparent; }
.t-loc { color: #9c9993; font-size: 7.200px; }
.t-date { text-align: right; }
.t-size, .t-date { color: #55524d; }
.c-foot { flex: none; margin-top: 14px; display: flex; align-items: center; justify-content: space-between; font: 400 7.200px/9px "Liberation Sans", sans-serif; color: #66625c; }
.move { width: 88px; height: 18px; background: #b8b1a8; color: #ebe8e3; font-size: 8.700px; line-height: 18px; text-align: center; }
```
